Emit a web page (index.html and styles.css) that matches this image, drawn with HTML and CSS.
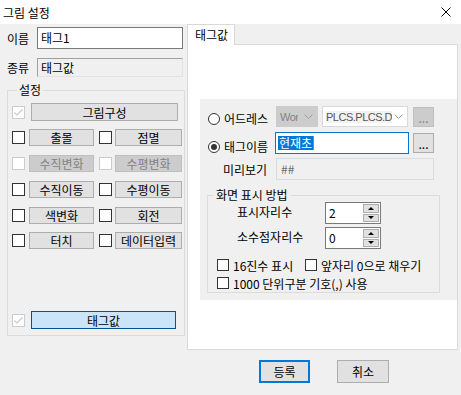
FILE: index.html
```html
<!DOCTYPE html>
<html>
  <head>
  <meta charset="UTF-8">
  <title>그림 설정</title>
  <link rel="stylesheet" href="styles.css">
  </head>
  <body>
    <div class="titlebar">
      <span>그림 설정</span>
      <svg class="close" width="10" height="10" viewBox="0 0 10 10"><path d="M0.5 0.5L9.5 9.5M9.5 0.5L0.5 9.5" stroke="#000" stroke-width="1"/></svg>
    </div>

    <div class="dialog">
      <div class="left">
        <div class="field">
          <label>이름</label>
          <div class="edit">태그1</div>
        </div>
        <div class="field">
          <label>종류</label>
          <div class="readonly">태그값</div>
        </div>

        <fieldset class="group settings">
          <legend>설정</legend>
          <div class="row first">
            <span class="chk off"><svg width="11" height="11" viewBox="0 0 11 11"><polyline points="1.5,5.5 4,8 9.5,2.5" fill="none" stroke="#c8c8c8" stroke-width="1.2"/></svg></span>
            <span class="btn wide">그림구성</span>
          </div>
          <div class="row r2">
            <span class="chk"></span><span class="btn b1">출몰</span>
            <span class="chk c2"></span><span class="btn b2">점멸</span>
          </div>
          <div class="row">
            <span class="chk off"></span><span class="btn b1 dis">수직변화</span>
            <span class="chk c2 off"></span><span class="btn b2 dis">수평변화</span>
          </div>
          <div class="row">
            <span class="chk"></span><span class="btn b1">수직이동</span>
            <span class="chk c2"></span><span class="btn b2">수평이동</span>
          </div>
          <div class="row">
            <span class="chk"></span><span class="btn b1">색변화</span>
            <span class="chk c2"></span><span class="btn b2">회전</span>
          </div>
          <div class="row r6">
            <span class="chk"></span><span class="btn b1">터치</span>
            <span class="chk c2"></span><span class="btn b2">데이터입력</span>
          </div>
          <div class="row last">
            <span class="chk off"><svg width="11" height="11" viewBox="0 0 11 11"><polyline points="1.5,5.5 4,8 9.5,2.5" fill="none" stroke="#c8c8c8" stroke-width="1.2"/></svg></span>
            <span class="btn tagbtn">태그값</span>
          </div>
        </fieldset>
      </div>

      <div class="right">
        <div class="tabs"><span class="tab">태그값</span></div>
        <div class="panel">
          <div class="form">
            <div class="frow frow1">
              <div class="opt"><span class="radio"></span>어드레스</div>
              <div class="combo combo1 dis"><span class="ctext">Wor</span><svg width="9" height="5" viewBox="0 0 9 5"><polyline points="0.5,0.5 4.5,4.5 8.5,0.5" fill="none" stroke="#a0a0a0"/></svg></div>
              <div class="combo combo2"><span class="ctext">PLCS.PLCS.D</span><svg width="9" height="5" viewBox="0 0 9 5"><polyline points="0.5,0.5 4.5,4.5 8.5,0.5" fill="none" stroke="#a0a0a0"/></svg></div>
              <span class="dots dis">...</span>
            </div>
            <div class="frow frow2">
              <div class="opt opt2"><span class="radio on"><span class="dot"></span></span>태그이름</div>
              <div class="tagedit"><span class="sel">현재초</span><span class="caret"></span></div>
              <span class="dots">...</span>
            </div>
            <div class="frow frow3">
              <div class="plabel">미리보기</div>
              <div class="preview">##</div>
            </div>

            <fieldset class="group display">
              <legend>화면 표시 방법</legend>
              <div class="srow">
                <span class="slabel">표시자리수</span>
                <div class="spin">
                  <span class="sval">2</span>
                  <span class="arrows"><span class="arr"><span class="up"></span></span><span class="arr"><span class="down"></span></span></span>
                </div>
              </div>
              <div class="srow srow2">
                <span class="slabel">소수점자리수</span>
                <div class="spin">
                  <span class="sval">0</span>
                  <span class="arrows"><span class="arr"><span class="up"></span></span><span class="arr"><span class="down"></span></span></span>
                </div>
              </div>
              <div class="crow">
                <span class="ci ci1"><span class="chk sm"></span>16진수 표시</span>
                <span class="ci"><span class="chk sm"></span>앞자리 0으로 채우기</span>
              </div>
              <div class="crow crow2">
                <span class="ci"><span class="chk sm"></span>1000 단위구분 기호(,) 사용</span>
              </div>
            </fieldset>
          </div>
        </div>
      </div>
    </div>

    <div class="footer">
      <span class="dbtn default">등록</span>
      <span class="dbtn cancel">취소</span>
    </div>
  </body>
</html>
```

FILE: styles.css
```css
* {
    box-sizing: border-box;
}

body {
    margin: 0;
    width: 461px;
    height: 395px;
    overflow: hidden;
    background: #f0f0f0;
    font: 12px "Noto Sans CJK KR", "Noto Sans", sans-serif;
    color: #000;
}

.titlebar {
    height: 24px;
    background: #fff;
    display: flex;
    align-items: center;
    justify-content: space-between;
    padding: 0 10px 0 3px;
}

.dialog {
    display: flex;
    height: 326px;
}

/* left column */
.left {
    width: 187px;
    padding: 3px 0 0 7px;
}

.field {
    display: flex;
    align-items: center;
}

.field + .field {
    margin-top: 9px;
}

.field label {
    width: 30px;
}

.edit {
    width: 146px;
    height: 22px;
    line-height: 20px;
    padding-left: 3px;
    background: #fff;
    border: 1px solid #7a7a7a;
}

.readonly {
    width: 146px;
    height: 19px;
    line-height: 17px;
    padding-left: 3px;
    background: #f0f0f0;
    border: 1px solid;
    border-color: #a0a0a0 #e3e3e3 #e3e3e3 #a0a0a0;
}

.group {
    margin: 0;
    padding: 0;
    border: 1px solid #dcdcdc;
    min-width: 0;
}

.group legend {
    padding: 0 2px;
    line-height: 14px;
}

.settings {
    margin-top: 6px;
    width: 178px;
    height: 253px;
    padding: 0 0 6px 4px;
    display: flex;
    flex-direction: column;
}

.settings legend {
    margin-left: 5px;
}

.row {
    display: flex;
    align-items: center;
    height: 17px;
    margin-top: 9px;
}

.row.first {
    height: 18px;
    margin-top: 6px;
}

.row.r2, .row.r6 {
    margin-top: 8px;
}

.row.last {
    height: 18px;
    margin-top: auto;
}

.chk {
    flex: none;
    width: 13px;
    height: 13px;
    background: #fff;
    border: 1px solid #333;
    display: flex;
    align-items: center;
    justify-content: center;
}

.chk.off {
    border-color: #cccccc;
}

.chk.sm {
    width: 12px;
    height: 12px;
    margin-right: 4px;
}

.btn {
    height: 100%;
    display: flex;
    align-items: center;
    justify-content: center;
    background: #e1e1e1;
    border: 1px solid #adadad;
}

.btn.dis {
    background: #cccccc;
    border-color: #bfbfbf;
    color: #838383;
}

.btn.wide {
    margin-left: 6px;
    width: 147px;
}

.btn.b1 {
    margin-left: 4px;
    width: 65px;
}

.chk.c2 {
    margin-left: 5px;
}

.btn.b2 {
    margin-left: 3px;
    width: 67px;
}

.btn.tagbtn {
    margin-left: 6px;
    width: 145px;
    background: #cce4f7;
    border-color: #005499;
}

/* right column */
.right {
    width: 271px;
}

.tabs {
    height: 20px;
    display: flex;
}

.tab {
    position: relative;
    z-index: 1;
    width: 48px;
    height: 21px;
    padding-left: 7px;
    line-height: 19px;
    background: #fff;
    border: 1px solid #d9d9d9;
    border-bottom: none;
}

.panel {
    height: 306px;
    background: #fff;
    border: 1px solid #d9d9d9;
    padding: 54px 0 0 12px;
}

.form {
    height: 201px;
    background: #f0f0f0;
}

.frow {
    display: flex;
    align-items: center;
}

.frow1 {
    padding-top: 7px;
    height: 28px;
}

.frow2 {
    margin-top: 5px;
    height: 22px;
}

.frow3 {
    margin-top: 4px;
    height: 22px;
}

.opt {
    width: 76px;
    padding: 4px 0 0 8px;
    display: flex;
    align-items: center;
}

.opt2 {
    width: 75px;
    padding-top: 7px;
}

.radio {
    flex: none;
    width: 12px;
    height: 12px;
    margin-right: 4px;
    border: 1px solid #333;
    border-radius: 50%;
    background: #fff;
    display: flex;
    align-items: center;
    justify-content: center;
}

.radio .dot {
    width: 6px;
    height: 6px;
    border-radius: 50%;
    background: #333;
}

.combo {
    height: 21px;
    display: flex;
    align-items: center;
    padding: 0 4px 0 3px;
    border: 1px solid #d9d9d9;
    background: #fff;
    color: #555;
    font: 11px "Liberation Sans", sans-serif;
    letter-spacing: -0.5px;
}

.combo svg {
    flex: none;
    margin-left: auto;
}

.ctext {
    overflow: hidden;
    white-space: nowrap;
}

.combo1 {
    width: 42px;
}

.combo.dis {
    background: #cccccc;
    border-color: #cccccc;
    color: #838383;
}

.combo2 {
    width: 86px;
    margin-left: 4px;
}

.combo2 .ctext {
    background: #f3f3f3;
}

.dots {
    width: 21px;
    height: 20px;
    margin-left: 5px;
    display: flex;
    justify-content: center;
    align-items: flex-end;
    padding-bottom: 3px;
    line-height: 10px;
    background: #e1e1e1;
    border: 1px solid #adadad;
}

.dots.dis {
    background: #cccccc;
    border-color: #bfbfbf;
    color: #838383;
}

.frow2 .dots {
    margin-left: 4px;
}

.tagedit {
    width: 134px;
    height: 22px;
    padding-left: 2px;
    display: flex;
    align-items: center;
    background: #fff;
    border: 1px solid #0078d7;
}

.sel {
    background: #0078d7;
    color: #fff;
    line-height: 14px;
    padding: 0 1px;
}

.caret {
    width: 1px;
    height: 14px;
    background: #d0782c;
}

.plabel {
    width: 76px;
    padding-left: 23px;
}

.preview {
    width: 158px;
    height: 22px;
    line-height: 20px;
    padding-left: 4px;
    color: #6d6d6d;
    background: #f0f0f0;
    border: 1px solid #dcdcdc;
}

.display {
    margin: 8px 0 0 7px;
    width: 233px;
    padding-bottom: 3px;
}

.display legend {
    margin-left: 6px;
}

.srow {
    display: flex;
    align-items: center;
    height: 22px;
}

.srow2 {
    margin-top: 3px;
}

.slabel {
    width: 117px;
    padding: 0 0 3px 29px;
}

.spin {
    width: 56px;
    height: 22px;
    display: flex;
    background: #fff;
    border: 1px solid #7a7a7a;
}

.sval {
    flex: 1;
    padding-left: 3px;
    line-height: 20px;
}

.arrows {
    width: 17px;
    padding: 1px 1px 1px 0;
    display: flex;
    flex-direction: column;
    gap: 1px;
}

.arr {
    flex: 1;
    display: flex;
    align-items: center;
    justify-content: center;
    background: #e1e1e1;
    border: 1px solid #adadad;
}

.up {
    border-left: 3px solid transparent;
    border-right: 3px solid transparent;
    border-bottom: 3px solid #000;
}

.down {
    border-left: 3px solid transparent;
    border-right: 3px solid transparent;
    border-top: 3px solid #000;
}

.crow {
    display: flex;
    align-items: center;
    height: 12px;
    margin-top: 10px;
    padding-left: 9px;
}

.crow2 {
    margin-top: 6px;
}

.ci {
    display: flex;
    align-items: center;
    white-space: nowrap;
}

.ci1 {
    width: 88px;
}

.footer {
    display: flex;
    gap: 27px;
    padding: 10px 0 0 259px;
}

.dbtn {
    width: 52px;
    height: 23px;
    display: flex;
    align-items: center;
    justify-content: center;
    background: #e1e1e1;
    border: 1px solid #adadad;
}

.dbtn.default {
    width: 51px;
    border: 2px solid #0078d7;
}
```
